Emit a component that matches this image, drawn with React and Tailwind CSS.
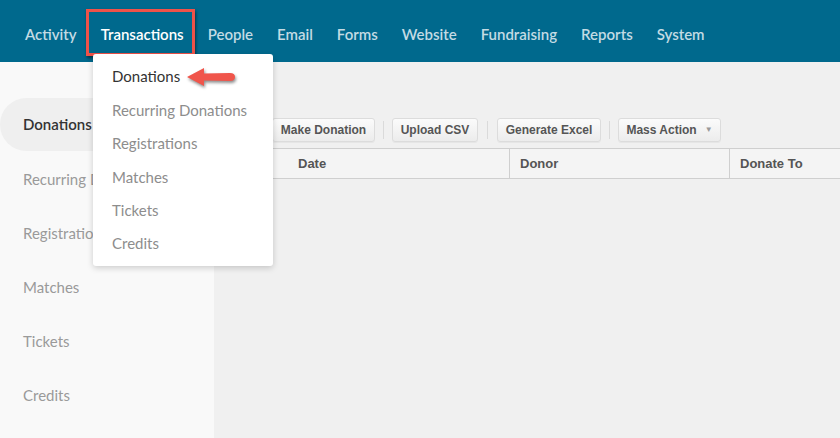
import React from 'react';

const navItems = ['Activity', 'Transactions', 'People', 'Email', 'Forms', 'Website', 'Fundraising', 'Reports', 'System'];
const subItems = ['Donations', 'Recurring Donations', 'Registrations', 'Matches', 'Tickets', 'Credits'];

function ToolButton({ label, width, caret }) {
  return (
    <div
      className={`${width} h-[24px] flex items-center justify-center gap-2 rounded-[3px] border border-[#dcdcdc] bg-gradient-to-b from-[#fbfbfb] to-[#ececec] text-[12px] font-bold text-[#555] shadow-[0_1px_0_rgba(0,0,0,0.04)]`}
    >
      <span>{label}</span>
      {caret && <span className="text-[8px] text-[#999]">▼</span>}
    </div>
  );
}

function Sep() {
  return <div className="w-px h-[18px] bg-[#dadada]" />;
}

// red callout arrow pointing left at "Donations"
function Arrow() {
  return (
    <svg width="54" height="24" viewBox="0 0 54 24" className="absolute left-[184px] top-[65px] drop-shadow-[1px_2px_1.5px_rgba(0,0,0,0.45)]">
      <path d="M3 12 L20 3 L20 8.5 L46 8 Q51 8 51 12 Q51 16 46 16 L20 15.5 L20 21 Z" fill="#f0554b" />
    </svg>
  );
}

export default function App() {
  return (
    <div className="relative w-[840px] h-[438px] overflow-hidden flex flex-col bg-[#f0f0f0] font-['Lato','Liberation_Sans',sans-serif]">
      {/* top nav */}
      <div className="h-[62px] shrink-0 bg-[#00698d] flex items-center pt-[6px] pl-[25px] gap-[24px] text-[15px] font-semibold">
        {navItems.map((n) => (
          <span key={n} className={n === 'Transactions' ? 'relative text-white' : 'text-[#c3dbe4]'}>
            {n}
            {n === 'Transactions' && (
              <span className="absolute -left-[15px] -right-[11px] -top-[14px] -bottom-[11px] border-[3px] border-[#ef5249] shadow-[1px_2px_3px_rgba(0,0,0,0.5)]" />
            )}
          </span>
        ))}
      </div>

      <div className="flex flex-1">
        {/* sidebar */}
        <div className="w-[214px] shrink-0 bg-[#f9f9f9] pt-[36px] text-[15px]">
          {subItems.map((s, i) => (
            <div
              key={s}
              className={
                i === 0
                  ? 'h-[53px] mb-[1px] flex items-center pl-[23px] rounded-l-[27px] bg-[#efefef] text-[#333] font-semibold'
                  : 'h-[54px] flex items-center pl-[23px] text-[#9a9a9a]'
              }
            >
              {s}
            </div>
          ))}
        </div>

        {/* main */}
        <div className="flex-1 pt-[56px] font-['Liberation_Sans',Arial,sans-serif]">
          <div className="flex items-center pl-[58px]">
            <ToolButton label="Make Donation" width="w-[103px]" />
            <div className="mx-[8px]"><Sep /></div>
            <ToolButton label="Upload CSV" width="w-[86px]" />
            <div className="mx-[9px]"><Sep /></div>
            <ToolButton label="Generate Excel" width="w-[104px]" />
            <div className="mx-[8px]"><Sep /></div>
            <ToolButton label="Mass Action" width="w-[103px]" caret />
          </div>

          <div className="mt-[6px] h-[31px] flex border-y border-[#cfcfcf] bg-[#f4f4f4] text-[13px] font-bold text-[#555]">
            <div className="w-[72px]" />
            <div className="w-[223px] flex items-center pl-[12px]">Date</div>
            <div className="w-[220px] flex items-center pl-[10px] border-l border-[#cfcfcf]">Donor</div>
            <div className="flex-1 flex items-center pl-[10px] border-l border-[#cfcfcf]">Donate To</div>
          </div>
        </div>
      </div>

      {/* dropdown menu */}
      <div className="absolute left-[93px] top-[54px] w-[180px] h-[212px] bg-white rounded-[3px] shadow-[0_2px_6px_rgba(0,0,0,0.18)] pt-[6px] text-[15px]">
        {subItems.map((s, i) => (
          <div key={s} className={`h-[33.4px] flex items-center pl-[19px] ${i === 0 ? 'text-[#333]' : 'text-[#8d8d8d]'}`}>
            {s}
          </div>
        ))}
      </div>
      <Arrow />
    </div>
  );
}
